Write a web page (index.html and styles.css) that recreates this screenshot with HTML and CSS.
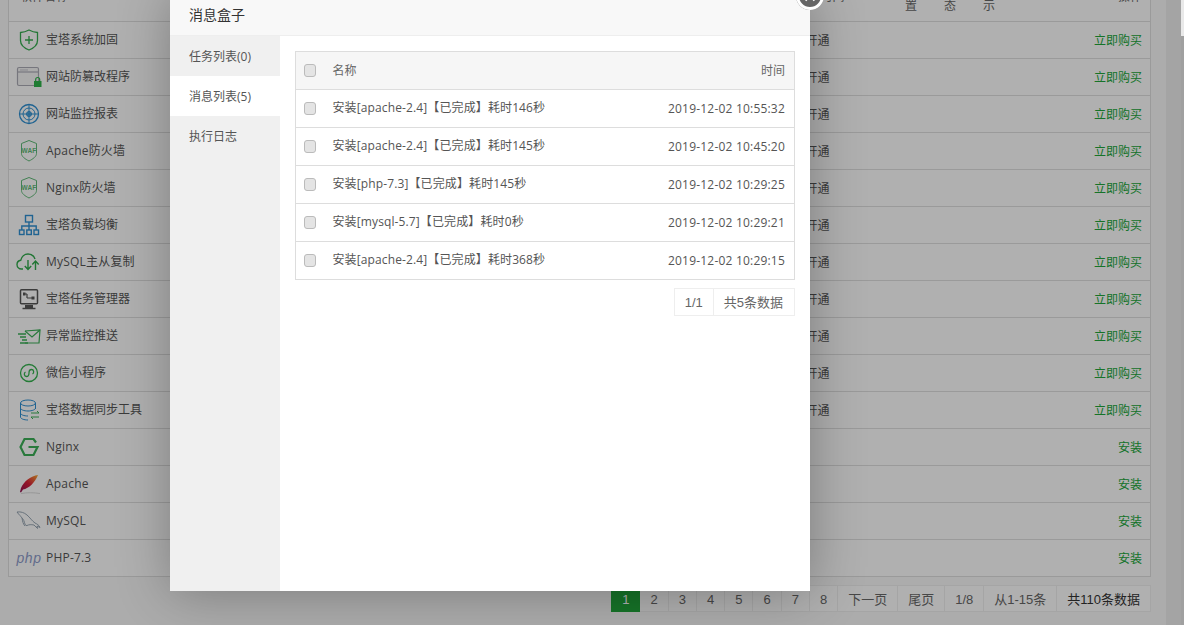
FILE: index.html
```html
<!DOCTYPE html>
<html lang="en">
<head>
  <meta charset="UTF-8">
  <meta name="viewport" content="width=device-width, initial-scale=1.0">
  <title>软件管理</title>
  <link rel="stylesheet" href="styles.css">
</head>
<body>

<div class="page">
  <div class="content">
    <table class="soft-table">
      <colgroup>
        <col class="col-name"><col class="col-desc"><col class="col-expire">
        <col class="col-flag"><col class="col-flag"><col class="col-flag"><col class="col-action">
      </colgroup>
      <thead>
        <tr>
          <th>软件名称</th><th>说明</th><th>到期时间</th>
          <th class="narrow">位置</th><th class="narrow">状态</th><th class="narrow">显示</th>
          <th class="action">操作</th>
        </tr>
      </thead>
      <tbody>
        <tr>
          <td class="name"><div class="soft"><span class="soft-icon"><svg viewBox="0 0 26 24" width="26" height="24" fill="none" stroke="#34ab4e" stroke-width="1.3"><path d="M13 2c3 1.600 5.600 2.300 8.500 2.500v8c0 4.500-3.500 7.500-8.500 9.500-5-2-8.500-5-8.500-9.500v-8C7.400 4.300 10 3.600 13 2z"/><path d="M13 8v8M9 12h8"/></svg></span>宝塔系统加固</div></td>
          <td></td><td>未开通</td><td></td><td></td><td></td><td class="action"><a class="buy">立即购买</a></td>
        </tr>
        <tr>
          <td class="name"><div class="soft"><span class="soft-icon"><svg viewBox="0 0 26 24" width="26" height="24" fill="none"><rect x="1.500" y="2.500" width="21" height="18" rx="1.500" fill="#f4f4f4" stroke="#a9a9b4" stroke-width="1.200"/><path d="M2 7h20" stroke="#a9a9b4" stroke-width="1.200"/><path d="M4 5h8" stroke="#c4c4cc"/><rect x="18" y="16" width="7.500" height="6" fill="#2fb24a"/><path d="M19.700 16v-1.500a2 2 0 0 1 4 0V16" stroke="#2fb24a" stroke-width="1.200"/></svg></span>网站防篡改程序</div></td>
          <td></td><td>未开通</td><td></td><td></td><td></td><td class="action"><a class="buy">立即购买</a></td>
        </tr>
        <tr>
          <td class="name"><div class="soft"><span class="soft-icon"><svg viewBox="0 0 26 24" width="26" height="24" fill="none" stroke="#2f8fd0"><circle cx="13" cy="12" r="9.500" stroke-width="1.300"/><circle cx="13" cy="12" r="6"/><circle cx="13" cy="12" r="2.500" fill="#6db3e0"/><path d="M13 2.500v19M3.500 12h19"/></svg></span>网站监控报表</div></td>
          <td></td><td>未开通</td><td></td><td></td><td></td><td class="action"><a class="buy">立即购买</a></td>
        </tr>
        <tr>
          <td class="name"><div class="soft latin"><span class="soft-icon"><svg viewBox="0 0 26 24" width="26" height="24" fill="none" stroke="#5fb876"><path d="M13 1.500l7.500 3v10c0 3-3.500 5.500-7.500 7.500-4-2-7.500-4.500-7.500-7.500v-10z"/><text class="waf" x="13" y="14">WAF</text></svg></span>Apache防火墙</div></td>
          <td></td><td>未开通</td><td></td><td></td><td></td><td class="action"><a class="buy">立即购买</a></td>
        </tr>
        <tr>
          <td class="name"><div class="soft latin"><span class="soft-icon"><svg viewBox="0 0 26 24" width="26" height="24" fill="none" stroke="#5fb876"><path d="M13 1.500l7.500 3v10c0 3-3.500 5.500-7.500 7.500-4-2-7.500-4.500-7.500-7.500v-10z"/><text class="waf" x="13" y="14">WAF</text></svg></span>Nginx防火墙</div></td>
          <td></td><td>未开通</td><td></td><td></td><td></td><td class="action"><a class="buy">立即购买</a></td>
        </tr>
        <tr>
          <td class="name"><div class="soft"><span class="soft-icon"><svg viewBox="0 0 26 24" width="26" height="24" fill="none" stroke="#2f8fd0" stroke-width="1.400"><rect x="9.500" y="2.500" width="7" height="6.500"/><rect x="3.500" y="17" width="4.500" height="4.500"/><rect x="10.800" y="17" width="4.500" height="4.500"/><rect x="18" y="17" width="4.500" height="4.500"/><path d="M13 9v8M5.800 17v-4h14.400v4"/></svg></span>宝塔负载均衡</div></td>
          <td></td><td>未开通</td><td></td><td></td><td></td><td class="action"><a class="buy">立即购买</a></td>
        </tr>
        <tr>
          <td class="name"><div class="soft latin"><span class="soft-icon"><svg viewBox="0 0 26 24" width="26" height="24" fill="none" stroke="#2fa84a" stroke-width="1.400"><path d="M7 19H5.500C3 19 1 17 1 14.500c0-2.300 1.700-4 3.800-4.300C5.500 6.500 8.500 4 12 4c3.300 0 6 2 7 5"/><path d="M12 10v9M8.800 16l3.200 3.500 3.200-3.500M19.500 20v-9M16.300 14.500l3.200-3.500 3.200 3.500"/></svg></span>MySQL主从复制</div></td>
          <td></td><td>未开通</td><td></td><td></td><td></td><td class="action"><a class="buy">立即购买</a></td>
        </tr>
        <tr>
          <td class="name"><div class="soft"><span class="soft-icon"><svg viewBox="0 0 26 24" width="26" height="24" fill="none" stroke="#555" stroke-width="1.500"><rect x="4.500" y="2.800" width="17" height="14" rx="1"/><path d="M8 7h3M11 7v4M11 11h7" stroke-width="1.200"/><rect x="7" y="5.500" width="2.500" height="3" fill="#555" stroke="none"/><rect x="15.500" y="9.500" width="3" height="3" fill="#555" stroke="none"/><path d="M9 19.500h8" stroke-width="3"/><path d="M6.500 21.500h13"/></svg></span>宝塔任务管理器</div></td>
          <td></td><td>未开通</td><td></td><td></td><td></td><td class="action"><a class="buy">立即购买</a></td>
        </tr>
        <tr>
          <td class="name"><div class="soft"><span class="soft-icon"><svg viewBox="0 0 26 24" width="26" height="24" fill="none" stroke="#3bae57" stroke-width="1.200"><path d="M9 7l15-1-1 13H9"/><path d="M9 7l7 6 8-7"/><path d="M2 10h8M4 13h6M6 16h5M4 19h8" stroke-width="1.300"/></svg></span>异常监控推送</div></td>
          <td></td><td>未开通</td><td></td><td></td><td></td><td class="action"><a class="buy">立即购买</a></td>
        </tr>
        <tr>
          <td class="name"><div class="soft"><span class="soft-icon"><svg viewBox="0 0 26 24" width="26" height="24" fill="none" stroke="#34b04e" stroke-width="1.300"><circle cx="13" cy="12" r="8.500"/><path d="M9.500 11c-1.800 1-1.500 4.500 1 4.500 2 0 2.500-1.500 2.500-3.500s.5-3.500 2.500-3.500c2.500 0 2.800 3.500 1 4.500"/></svg></span>微信小程序</div></td>
          <td></td><td>未开通</td><td></td><td></td><td></td><td class="action"><a class="buy">立即购买</a></td>
        </tr>
        <tr>
          <td class="name"><div class="soft"><span class="soft-icon"><svg viewBox="0 0 26 24" width="26" height="24" fill="none" stroke="#2f8fd0"><ellipse cx="12" cy="5" rx="7.500" ry="3"/><path d="M4.500 5v14c0 1.700 3.400 3 7.500 3M19.500 5v6M4.500 10c0 1.700 3.400 3 7.500 3s7.500-1.300 7.500-3M4.500 15c0 1.700 3.400 3 7.500 3"/><path d="M15 15h8l-2-2M23 19h-8l2 2" stroke="#3bae57"/></svg></span>宝塔数据同步工具</div></td>
          <td></td><td>未开通</td><td></td><td></td><td></td><td class="action"><a class="buy">立即购买</a></td>
        </tr>
        <tr>
          <td class="name"><div class="soft latin"><span class="soft-icon"><svg viewBox="0 0 26 24" width="26" height="24" fill="none" stroke="#3bae57" stroke-width="2.200"><path d="M20 7.500l-2.500-3.500H8.500L4.500 12l4 8h9l4-8h-9"/></svg></span>Nginx</div></td>
          <td></td><td></td><td></td><td></td><td></td><td class="action"><a class="buy">安装</a></td>
        </tr>
        <tr>
          <td class="name"><div class="soft latin"><span class="soft-icon"><svg viewBox="0 0 26 24" width="26" height="24"><defs><linearGradient id="feather" x1="0" y1="1" x2="1" y2="0"><stop offset="0" stop-color="#8a1050"/><stop offset=".5" stop-color="#d8203a"/><stop offset="1" stop-color="#f7a830"/></linearGradient></defs><path d="M22 3C15 4 8 9 5 16l-1 4 1 .5 2-3c6-1 12-7 15-14.500z" fill="url(#feather)"/><path d="M5 21.500c6-1 13-1 19 0" stroke="#d8d8d8" fill="none"/></svg></span>Apache</div></td>
          <td></td><td></td><td></td><td></td><td></td><td class="action"><a class="buy">安装</a></td>
        </tr>
        <tr>
          <td class="name"><div class="soft latin"><span class="soft-icon"><svg viewBox="0 0 26 24" width="26" height="24" fill="none" stroke="#8a9aa8" stroke-width=".9"><path d="M1 3c4-.5 7 .5 10 3 3 2.500 5 6 8 8 2 1 4 2 5 4.500l-3-1.500.5 2.500-3.500-3.500c-3-.5-5-.5-7 .5-1.500.5-2-1-2.500-3-.5-3-3.500-5.500-4.500-7-1-1-2-2-3-3.500z"/><path d="M6 9c.5 3 1 6 3 8"/></svg></span>MySQL</div></td>
          <td></td><td></td><td></td><td></td><td></td><td class="action"><a class="buy">安装</a></td>
        </tr>
        <tr>
          <td class="name"><div class="soft latin"><span class="soft-icon"><span class="php-mark">php</span></span>PHP-7.3</div></td>
          <td></td><td></td><td></td><td></td><td></td><td class="action"><a class="buy">安装</a></td>
        </tr>
      </tbody>
    </table>

    <div class="page-bar">
      <span class="page-num on">1</span><span class="page-num">2</span><span class="page-num">3</span><span class="page-num">4</span><span class="page-num">5</span><span class="page-num">6</span><span class="page-num">7</span><span class="page-num">8</span><span class="page-num">下一页</span><span class="page-num">尾页</span><span class="page-num">1/8</span><span class="page-num">从1-15条</span><span class="page-num total">共110条数据</span>
    </div>
  </div>
  <div class="scrollbar"></div>
  <div class="scroll-edge"></div>
</div>

<div class="mask"></div>
<div class="edge-top"></div>

<div class="layer">
  <div class="layer-title">消息盒子</div>
  <a class="layer-close"><svg viewBox="0 0 28 28" width="28" height="28" fill="none" stroke="#fff" stroke-width="2"><path d="M9.500 9.500l9 9M18.500 9.500l-9 9"/></svg></a>
  <div class="layer-body">
    <ul class="side-menu">
      <li>任务列表(0)</li>
      <li class="active">消息列表(5)</li>
      <li>执行日志</li>
    </ul>
    <div class="msg-panel">
      <table class="msg-table">
        <thead>
          <tr>
            <th class="check"><input type="checkbox"></th>
            <th>名称</th>
            <th class="time">时间</th>
          </tr>
        </thead>
        <tbody>
          <tr>
            <td class="check"><input type="checkbox"></td>
            <td><span class="task">安装[apache-2.4]【已完成】耗时146秒</span></td>
            <td class="time">2019-12-02 10:55:32</td>
          </tr>
          <tr>
            <td class="check"><input type="checkbox"></td>
            <td><span class="task">安装[apache-2.4]【已完成】耗时145秒</span></td>
            <td class="time">2019-12-02 10:45:20</td>
          </tr>
          <tr>
            <td class="check"><input type="checkbox"></td>
            <td><span class="task">安装[php-7.3]【已完成】耗时145秒</span></td>
            <td class="time">2019-12-02 10:29:25</td>
          </tr>
          <tr>
            <td class="check"><input type="checkbox"></td>
            <td><span class="task">安装[mysql-5.7]【已完成】耗时0秒</span></td>
            <td class="time">2019-12-02 10:29:21</td>
          </tr>
          <tr>
            <td class="check"><input type="checkbox"></td>
            <td><span class="task">安装[apache-2.4]【已完成】耗时368秒</span></td>
            <td class="time">2019-12-02 10:29:15</td>
          </tr>
        </tbody>
      </table>
      <div class="msg-pager">
        <span>1/1</span><span>共5条数据</span>
      </div>
    </div>
  </div>
</div>

</body>
</html>
```

FILE: styles.css
```css
* {
  box-sizing: border-box;
}

html, body {
  height: 100%;
  margin: 0;
  overflow: hidden;
}

body {
  font-family: "Open Sans", "Noto Sans CJK SC", sans-serif;
  font-size: 12px;
  color: #555;
  background: #f7f7f7;
}

.page {
  display: flex;
  height: 100%;
}

.content {
  flex: 1;
  min-width: 0;
  padding: 0 15px 0 8px;
  margin-top: -29px;
}

.scrollbar {
  width: 15px;
  background: #ebebeb;
}

.scroll-edge {
  width: 3px;
  background: #e6e6e6;
}

/* page table */
.soft-table {
  width: 100%;
  table-layout: fixed;
  border-collapse: collapse;
  background: #fdfdfd;
  border: 1px solid #ddd;
}

.col-name { width: 300px; }
.col-desc { width: 477px; }
.col-expire { width: 106px; }
.col-flag { width: 39px; }

.soft-table th {
  height: 50px;
  padding: 0 11px;
  font-weight: 400;
  line-height: 17px;
  text-align: left;
  color: #666;
  border-bottom: 1px solid #ddd;
}

.soft-table th.narrow {
  padding: 0 13px;
  text-align: center;
}

.soft-table td {
  height: 37px;
  padding: 0 8px;
  border-bottom: 1px solid #ddd;
}

.soft-table td.name {
  padding-bottom: 2px;
}

.soft-table .action {
  text-align: right;
  padding-right: 8px;
}

.soft {
  display: flex;
  align-items: center;
}

.soft.latin {
  letter-spacing: 0.2px;
}

.soft-icon {
  width: 26px;
  height: 24px;
  margin: 2px 4px 0 -1px;
  flex-shrink: 0;
}

.soft-icon svg {
  display: block;
}

.waf {
  font-size: 6.5px;
  font-weight: 700;
  font-family: "Liberation Sans", sans-serif;
  text-anchor: middle;
  stroke: none;
  fill: #5fb876;
}

.php-mark {
  display: block;
  font-family: "Liberation Sans", sans-serif;
  font-style: italic;
  font-size: 14px;
  letter-spacing: 0.5px;
  line-height: 24px;
  text-align: center;
  color: #8c9ac8;
}

.buy {
  color: #20a53a;
}

/* pager under the table */
.page-bar {
  display: flex;
  justify-content: flex-end;
  margin-top: 8px;
  font-size: 13px;
}

.page-num {
  height: 27px;
  padding: 0 10px;
  line-height: 27px;
  background: #fdfdfd;
  border: 1px solid #ececec;
  border-left: 0;
  color: #666;
  font-family: "Liberation Sans", "Noto Sans CJK SC", sans-serif;
}

.page-num.on {
  padding-left: 11px;
  background: #20a53a;
  border-color: #20a53a;
  color: #fff;
}

.page-num.total {
  color: #333;
}

/* overlay */
.mask {
  position: absolute;
  inset: 0;
  background: rgba(0, 0, 0, 0.3);
}

.edge-top {
  position: absolute;
  top: 0;
  right: 0;
  width: 3px;
  height: 36px;
  background: #e9e9e9;
}

.layer {
  position: absolute;
  left: 170px;
  top: -6px;
  width: 640px;
  height: 597px;
  display: flex;
  flex-direction: column;
  background: #fff;
  box-shadow: 1px 1px 50px rgba(0, 0, 0, 0.3);
}

.layer-title {
  height: 42px;
  padding-left: 19px;
  line-height: 42px;
  font-size: 14px;
  color: #333;
  background: #f8f8f8;
  border-bottom: 1px solid #eee;
}

.layer-close {
  position: absolute;
  right: -14px;
  top: -12px;
  width: 28px;
  height: 28px;
  border-radius: 50%;
  background: #666;
  outline: 3px solid #fff;
  outline-offset: -3px;
}

.layer-close svg {
  display: block;
}

.layer-body {
  flex: 1;
  display: flex;
  min-height: 0;
}

.side-menu {
  width: 110px;
  margin: 0;
  padding: 0;
  list-style: none;
  background: #f0f0f0;
}

.side-menu li {
  height: 40px;
  padding-left: 19px;
  line-height: 42px;
  color: #555;
}

.side-menu li.active {
  background: #fff;
}

.msg-panel {
  flex: 1;
  padding: 15px;
}

.msg-table {
  width: 100%;
  border-collapse: collapse;
  border: 1px solid #ddd;
}

.msg-table th {
  height: 38px;
  padding: 0 9px 2px 0;
  font-weight: 400;
  text-align: left;
  color: #666;
  background: #f6f6f6;
  border-bottom: 1px solid #ddd;
}

.msg-table td {
  height: 38px;
  padding: 0 9px 0 0;
  color: #555;
  border-bottom: 1px solid #ddd;
}

.msg-table .check {
  width: 37px;
  padding: 0 0 0 8px;
}

.msg-table .time {
  text-align: right;
}

.msg-table td.time {
  letter-spacing: 0.2px;
}

.task {
  position: relative;
  top: -2px;
  letter-spacing: 0.12px;
}

input[type="checkbox"] {
  display: block;
  width: 12px;
  height: 13px;
  margin: 0;
  appearance: none;
  background: #e4e4e4;
  border: 1px solid #bbb;
  border-radius: 3px;
}

.msg-pager {
  display: flex;
  justify-content: flex-end;
  margin-top: 8px;
  font-family: "Liberation Sans", "Noto Sans CJK SC", sans-serif;
  font-size: 13px;
}

.msg-pager span {
  height: 28px;
  padding: 0 11px 0 10px;
  line-height: 28px;
  border: 1px solid #eee;
  border-left: 0;
  color: #666;
}

.msg-pager span:first-child {
  padding-right: 10px;
  border-left: 1px solid #eee;
}
```
